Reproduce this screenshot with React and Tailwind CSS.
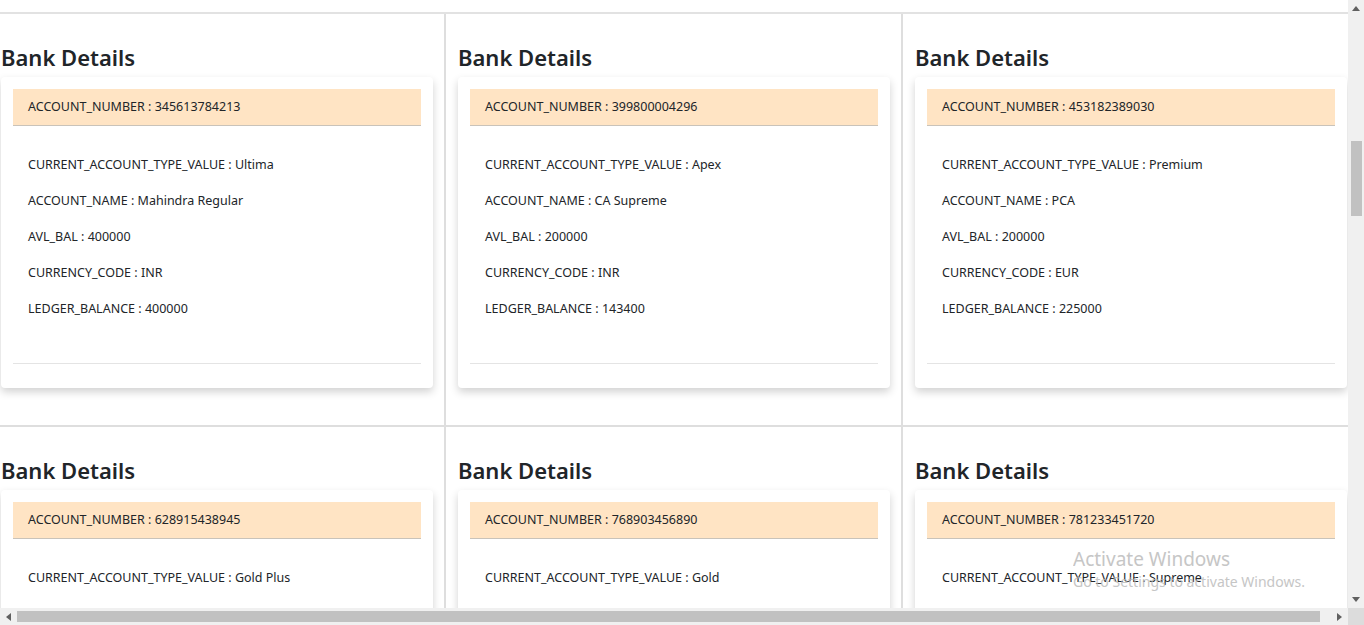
import React from "react";

const accounts = [
  { num: "345613784213", type: "Ultima", name: "Mahindra Regular", avl: "400000", cur: "INR", ledger: "400000" },
  { num: "399800004296", type: "Apex", name: "CA Supreme", avl: "200000", cur: "INR", ledger: "143400" },
  { num: "453182389030", type: "Premium", name: "PCA", avl: "200000", cur: "EUR", ledger: "225000" },
  { num: "628915438945", type: "Gold Plus", name: "Mahindra Gold", avl: "300000", cur: "INR", ledger: "300000" },
  { num: "768903456890", type: "Gold", name: "CA Gold", avl: "250000", cur: "INR", ledger: "250000" },
  { num: "781233451720", type: "Supreme", name: "CA Supreme", avl: "150000", cur: "USD", ledger: "150000" },
];

function Card({ a }) {
  const rows = [
    ["CURRENT_ACCOUNT_TYPE_VALUE", a.type],
    ["ACCOUNT_NAME", a.name],
    ["AVL_BAL", a.avl],
    ["CURRENCY_CODE", a.cur],
    ["LEDGER_BALANCE", a.ledger],
  ];
  return (
    <div className="pl-[12px] pr-[11px] border-r-2 border-b-2 border-[#dedede] h-[413px]">
      <h2 className="h-[63px] pt-[30px] text-[22px] leading-[26px] font-semibold text-[#212529]">
        Bank Details
      </h2>
      <div className="bg-white rounded-[4px] shadow-[0_4px_8px_0_rgba(0,0,0,0.18)] p-[12px] pb-[24px]">
        <div className="h-[37px] bg-[#ffe4c4] border-b border-[#c9c3ba] pl-[15px] flex items-center text-[12.5px] text-[#212529]">
          ACCOUNT_NUMBER : {a.num}
        </div>
        <div className="pt-[21px] pl-[15px] pb-[36px]">
          {rows.map(([k, v]) => (
            <div key={k} className="h-[36px] flex items-center text-[12.5px] text-[#212529]">
              {k} : {v}
            </div>
          ))}
        </div>
        <div className="border-t border-[#e4e4e4]" />
      </div>
    </div>
  );
}

export default function App() {
  return (
    <div
      className="relative w-[1364px] h-[625px] bg-white flex flex-col overflow-hidden"
      style={{ fontFamily: '"Noto Sans", "Open Sans", sans-serif' }}
    >
      <div className="flex flex-1 min-h-0">
        <div className="flex-1 overflow-hidden pt-[12px]">
          <div className="border-t-2 border-[#e2e2e2] -ml-[11px] grid grid-cols-[457px_457px_457px]">
            {accounts.map((a) => (
              <Card key={a.num} a={a} />
            ))}
          </div>
        </div>
        <div className="w-[16px] bg-[#f0f0f0] flex flex-col items-center">
          <div className="h-[17px] flex items-center justify-center">
            <svg width="8" height="5" viewBox="0 0 8 5"><path d="M0 5 L4 0 L8 5 Z" fill="#606060" /></svg>
          </div>
          <div className="h-[124px]" />
          <div className="w-[11px] h-[75px] bg-[#c1c1c1]" />
          <div className="flex-1" />
          <div className="h-[17px] flex items-center justify-center">
            <svg width="8" height="5" viewBox="0 0 8 5"><path d="M0 0 L8 0 L4 5 Z" fill="#606060" /></svg>
          </div>
        </div>
      </div>
      <div className="h-[17px] flex bg-[#f0f0f0]">
        <div className="w-[17px] flex items-center justify-center">
          <svg width="5" height="8" viewBox="0 0 5 8"><path d="M5 0 L0 4 L5 8 Z" fill="#606060" /></svg>
        </div>
        <div className="flex-1 flex items-center">
          <div className="h-[11px] w-[1303px] bg-[#c1c1c1]" />
        </div>
        <div className="w-[17px] flex items-center justify-center">
          <svg width="5" height="8" viewBox="0 0 5 8"><path d="M0 0 L5 4 L0 8 Z" fill="#606060" /></svg>
        </div>
        <div className="w-[16px] bg-[#dcdcdc]" />
      </div>
      <div
        className="absolute left-[1073px] top-[547px] text-[#b8b8b8] pointer-events-none"
        style={{ fontFamily: '"Noto Sans", sans-serif' }}
      >
        <div className="text-[19px] leading-[24px] opacity-80">Activate Windows</div>
        <div className="mt-[2px] text-[14px] leading-[18px] opacity-80">Go to Settings to activate Windows.</div>
      </div>
    </div>
  );
}
